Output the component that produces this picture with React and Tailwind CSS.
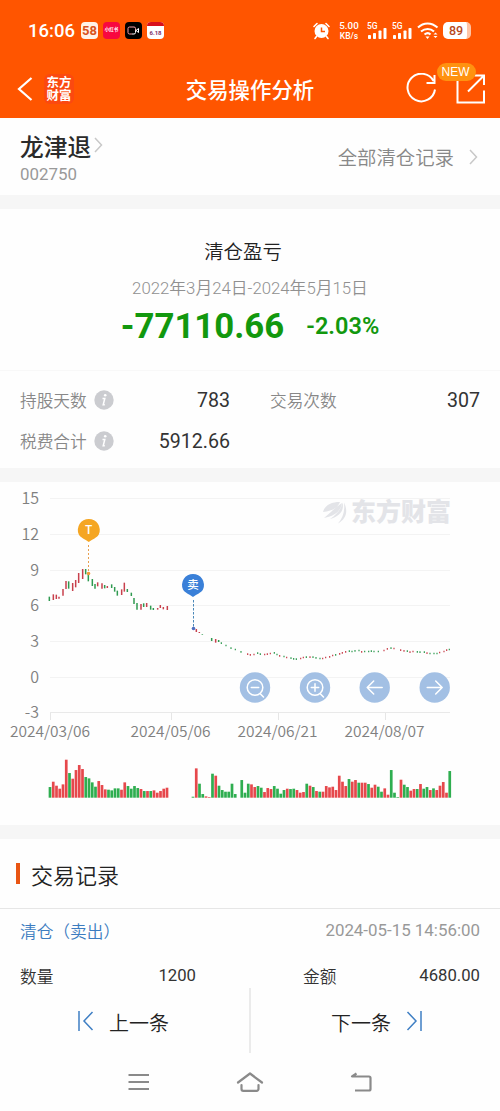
import React from "react";

// 3px wide candles: x, high, low, direction (chart units are 1/3 px)
const candles = [
  [148, 350, 363, "g"], [160, 343, 360, "r"], [169, 344, 357, "r"], [177, 350, 356, "r"],
  [189, 327, 347, "r"], [198, 303, 327, "r"], [206, 304, 326, "g"], [218, 309, 333, "r"],
  [227, 300, 322, "r"], [236, 279, 309, "r"], [248, 267, 297, "r"], [257, 267, 283, "g"],
  [265, 285, 304, "g"], [277, 297, 318, "g"], [285, 312, 326, "g"], [293, 307, 319, "r"],
  [306, 310, 326, "r"], [314, 315, 325, "g"], [322, 318, 324, "r"], [335, 313, 324, "g"],
  [344, 321, 335, "g"], [352, 332, 347, "g"], [365, 328, 345, "r"], [373, 308, 335, "r"],
  [382, 327, 336, "g"], [394, 338, 348, "g"], [402, 354, 372, "g"], [411, 369, 389, "g"],
  [423, 372, 389, "r"], [431, 370, 381, "g"], [440, 369, 381, "r"], [452, 377, 389, "g"],
  [460, 384, 390, "g"], [473, 384, 389, "r"], [481, 375, 384, "r"], [490, 381, 388, "r"],
  [502, 378, 390, "r"], [589, 447, 456, "r"], [598, 456, 459, "r"], [607, 463, 465, "g"],
  [635, 474, 483, "g"], [647, 477, 488, "r"], [656, 480, 486, "g"],
];

// flat days after the gap: x, y, direction
const dots = [
  [664, 489, "g"], [678, 496, "g"], [693, 504, "g"], [706, 508, "g"], [723, 515, "g"],
  [743, 522, "r"], [751, 524, "r"], [762, 523, "r"], [773, 519, "g"], [781, 522, "g"],
  [794, 523, "r"], [802, 522, "r"], [811, 520, "r"], [823, 518, "g"], [831, 523, "g"],
  [839, 527, "r"], [852, 529, "g"], [860, 532, "r"], [873, 534, "g"], [881, 536, "g"],
  [889, 537, "g"], [902, 535, "r"], [910, 532, "r"], [919, 531, "g"], [930, 531, "r"],
  [939, 531, "g"], [948, 533, "g"], [960, 535, "g"], [968, 535, "r"], [977, 532, "r"],
  [989, 530, "r"], [998, 526, "r"], [1007, 524, "g"], [1019, 521, "r"], [1027, 518, "r"],
  [1037, 515, "r"], [1048, 513, "g"], [1056, 514, "g"], [1065, 512, "g"], [1077, 511, "g"],
  [1085, 515, "r"], [1094, 514, "g"], [1106, 514, "g"], [1114, 513, "g"], [1122, 514, "g"],
  [1135, 514, "g"], [1152, 511, "r"], [1162, 506, "r"], [1173, 504, "g"], [1182, 505, "r"],
  [1202, 510, "r"], [1212, 512, "r"], [1222, 513, "g"], [1230, 516, "r"], [1239, 514, "r"],
  [1252, 515, "g"], [1260, 516, "g"], [1273, 516, "g"], [1281, 519, "r"], [1290, 520, "g"],
  [1302, 520, "g"], [1311, 520, "g"], [1319, 517, "r"], [1332, 514, "r"], [1340, 510, "r"],
  [1348, 508, "g"],
];

const volumeA =
  "g32 r48 r36 r27 r40 r114 g74 r57 r83 r98 r86 g62 g58 g46 g33 r50 r38 r25 g24 g22 g28 g28 r24 r46 g35 g27 g35 g29 r26 g20 r20 g20 r22 r15 r20 r27 r30";
const volumeB =
  "g3 r88 g42 g11 r4 r2 g72 r66 g36 g23 g18 g18 g42 g11 g0 g53 g15 g42 r40 r32 g35 g30 r17 r29 r26 g35 g27 g12 g23 r27 g26 g27 r23 r15 r17 g42 r36 g32 r20 g18 r18 r35 r31 r33 r23 r66 r48 r35 g56 r48 r53 g45 r45 r45 g41 r30 r39 g33 g18 r28 r9 g83 g15 g2 r54 g39 g32 r21 r26 g26 r41 g27 g32 r23 g28 r23 r36 r47 r15 g80";

const yAxis = [
  ["15", 498], ["12", 534], ["9", 570], ["6", 605], ["3", 641], ["0", 677], ["-3", 712],
];
const xAxis = [
  ["2024/03/06", 50], ["2024/05/06", 170.5], ["2024/06/21", 277.5], ["2024/08/07", 384.5],
];

const candleColor = { r: "#c8404c", g: "#2f9a50" };
const barColor = { r: "#e6484c", g: "#2fae50" };

const VolumeBars = ({ data, start }) =>
  data.split(" ").map((item, i) => {
    const h = Number(item.slice(1)) / 3;
    return (
      <rect
        key={i}
        x={start + i * 3.25 - 1.35}
        y={797.7 - h}
        width="2.7"
        height={h}
        fill={barColor[item[0]]}
      />
    );
  });

const RoundButton = ({ x, children }) => (
  <g transform={`translate(${x} 687.5)`}>
    <circle r="15.2" fill="#a3c0e4" />
    <g fill="none" stroke="#fff" strokeWidth="1.5" strokeLinecap="round" strokeLinejoin="round">
      {children}
    </g>
  </g>
);

const Chart = () => (
  <svg
    width="500"
    height="343"
    viewBox="0 482 500 343"
    className="block font-['Noto_Sans_CJK_SC',sans-serif] font-[350]"
  >
    {yAxis.map(([label, y]) => (
      <g key={label}>
        <path d={`M50 ${y + 0.5}H450`} stroke={label === "-3" ? "#e9e9e9" : "#f3f3f3"} />
        <text x="39" y={y + 5.5} textAnchor="end" fontSize="16" fill="#808080">
          {label}
        </text>
      </g>
    ))}
    {xAxis.map(([label, x]) => (
      <g key={label}>
        <path d={`M${Math.round(x) + 0.5} 713v7`} stroke="#e6e6e6" />
        <text x={x} y="737" textAnchor="middle" fontSize="15.5" fill="#808080">
          {label}
        </text>
      </g>
    ))}

    {/* watermark */}
    <g fill="#e3e4e8">
      <path d="M323 512c2-7 8-10 17-10-2 6-8 9-17 10zM324 518c7-6 11-10 18-15-1 8-7 13-18 15z" />
      <path d="M330 519c6-4 11-9 12.500-16.500 2 8-3 14-12.500 16.500zM338 523.500c5-6 7-12 6-21 4 8 3 16-6 21z" />
      <text x="351" y="521" fontSize="25" fontWeight="900" textLength="100">
        东方财富
      </text>
    </g>

    <g transform="translate(0 480) scale(0.33333)">
      {candles.map(([x, high, low, dir]) => (
        <path key={x} d={`M${x} ${high}V${low}`} stroke={candleColor[dir]} strokeWidth="4.500" />
      ))}
      {dots.map(([x, y, dir]) => (
        <path key={x} d={`M${x} ${y - 2}v5`} stroke={candleColor[dir]} strokeWidth="3.6" />
      ))}
    </g>

    {/* trade markers */}
    <path d="M88.5 545v27" stroke="#e8a050" strokeDasharray="2 2" />
    <circle cx="88.5" cy="573.5" r="1.8" fill="#f09a3c" />
    <path d="M78.8 534.5a11 11 0 1 1 20 0c-2 3.500-6 4.500-10 7.500-4-3-8-4-10-7.500z" fill="#f5a623" />
    <text x="88.700" y="533.500" textAnchor="middle" fontSize="12" fontWeight="500" fill="#fff">
      T
    </text>
    <path d="M193.500 600v27" stroke="#4a88b8" strokeDasharray="2.500 1.500" />
    <circle cx="193.500" cy="628.500" r="1.800" fill="#4f6fc0" />
    <path d="M183 589.500a11 11 0 1 1 20 0c-2 3.500-6 4.500-10 7.500-4-3-8-4-10-7.500z" fill="#3a80d8" />
    <text x="193" y="588.500" textAnchor="middle" fontSize="11.500" fontWeight="500" fill="#fff">
      卖
    </text>

    <RoundButton x={255}>
      <circle r="7.800" />
      <path d="M-3.700 0h7.400M5.500 6.500l3 3" />
    </RoundButton>
    <RoundButton x={315}>
      <circle r="7.800" />
      <path d="M-3.700 0h7.400M0-3.700v7.400M5.500 6.500l3 3" />
    </RoundButton>
    <RoundButton x={374.7}>
      <path d="M7.500 0h-15M-1-6.500l-6.500 6.500 6.500 6.500" />
    </RoundButton>
    <RoundButton x={434.7}>
      <path d="M-7.500 0h15M1-6.500l6.500 6.500-6.500 6.500" />
    </RoundButton>

    <VolumeBars data={volumeA} start={50} />
    <VolumeBars data={volumeB} start={193} />
  </svg>
);

const Chevron = ({ className }) => (
  <svg width="9" height="16" viewBox="0 0 9 16" className={className}>
    <path d="M1 1l6.500 7L1 15" fill="none" stroke="#c8c8c8" strokeWidth="1.500" />
  </svg>
);

const Signal = () => (
  <div className="relative h-[18px] w-[20px]">
    <span className="absolute -top-[1px] left-0 text-[8.5px] leading-[10px] font-medium">5G</span>
    <svg width="20" height="18" viewBox="0 0 20 18" className="block" fill="#fff">
      <rect x="1" y="13" width="3" height="4" rx=".8" />
      <rect x="6" y="11" width="3" height="6" rx=".8" />
      <rect x="11.500" y="8.500" width="3" height="8.500" rx=".8" />
      <rect x="16.500" y="6" width="3" height="11" rx=".8" />
    </svg>
  </div>
);

const StatusBar = () => (
  <div className="flex h-[61px] items-center justify-between pr-[28px] pl-[28px]">
    <div className="flex items-center gap-[5px]">
      <span className="mt-px mr-[2px] w-[46px] text-[18.5px] leading-none font-medium whitespace-nowrap">
        16:06
      </span>
      <span className="flex size-[17px] items-center justify-center rounded-[4px] bg-[#fff3e8] text-[13px] leading-none font-bold text-[#d9541c]">
        58
      </span>
      <span className="flex size-[17px] items-center justify-center rounded-[4px] bg-[#f8083f] text-[4.5px] leading-none font-bold whitespace-nowrap">
        小红书
      </span>
      <span className="flex size-[17px] items-center justify-center rounded-[4px] bg-black">
        <svg width="13" height="9" viewBox="0 0 13 9" fill="none" stroke="#fff">
          <path d="M5 8H2.500A1.500 1.500 0 0 1 1 6.500v-4A1.500 1.500 0 0 1 2.500 1H7a1.500 1.500 0 0 1 1.500 1.500V5" stroke="#f4a0a8" />
          <path d="M8.500 4.500V6.500A1.500 1.500 0 0 1 7 8H5M9 4.500l2.500-2v4z" />
        </svg>
      </span>
      <span className="flex size-[17px] flex-col overflow-hidden rounded-[4px] bg-white">
        <span className="h-[4px] bg-[#d8101c]" />
        <span className="flex flex-1 items-center justify-center text-[6px] leading-none font-bold text-[#803068]">
          6.18
        </span>
      </span>
    </div>
    <div className="flex items-center">
      <svg width="17" height="18" viewBox="0 0 17 18" className="mr-[9px] ml-px">
        <circle cx="8.500" cy="9" r="7" fill="#fff" />
        <path d="M1 4.500L4 1.500M16 4.500l-3-3M3.500 14.500L2 16.500M13.500 14.500l1.500 2" stroke="#fff" strokeWidth="1.600" strokeLinecap="round" />
        <path d="M8.500 5.500V9.500H12" fill="none" stroke="#f50" strokeWidth="1.500" />
      </svg>
      <div className="mr-[8px] flex w-[20px] flex-col items-center leading-[10px] font-medium">
        <span className="text-[9.8px]">5.00</span>
        <span className="text-[8.5px]">KB/s</span>
      </div>
      <Signal />
      <span className="w-[5px]" />
      <Signal />
      <svg width="22" height="18" viewBox="0 0 22 18" fill="none" stroke="#fff" strokeWidth="2" className="mr-[4px] ml-[5px]">
        <path d="M1 5.500C6.500 0 14.500 0 20.500 5.500M4 9.500C8 6 13.500 6 17 9.500M7.500 12.500c2-1.600 4.500-1.600 6 0" />
        <path d="M8.500 14.500h4l-2 2.500zM16.500 12.500l2-2 2 2zM16.500 14l2 2 2-2z" fill="#fff" stroke="none" />
      </svg>
      <span className="mr-px flex h-[17px] w-[28px] items-center justify-center rounded-[5px] border-r-[4px] border-[#ffc4a6] bg-white text-[12.5px] leading-none font-medium text-[#b8481c]">
        <span className="pt-px pl-[2px]">89</span>
      </span>
    </div>
  </div>
);

const NavBar = () => (
  <div className="relative flex h-[57px] items-center justify-between pr-[14px] pb-[2px] pl-[17px]">
    <div className="flex items-center gap-[11px]">
      <svg width="16" height="26" viewBox="0 0 16 26" fill="none" stroke="#fff" strokeWidth="2.200">
        <path d="M14.500 2L2 13l12.500 11" />
      </svg>
      <span className="flex size-[30px] items-center justify-center rounded-[6px] bg-[#fb4910] text-[12.5px] leading-[13px] font-bold">
        东方
        <br />
        财富
      </span>
    </div>
    <h1 className="absolute inset-x-0 top-[16px] text-center text-[21.4px] leading-[28px] font-medium">
      交易操作分析
    </h1>
    <div className="relative flex items-center gap-[19px]">
      <svg width="31" height="32" viewBox="0 0 31 32" fill="none" stroke="#fff" strokeWidth="2">
        <path d="M27.500 8A13.800 13.800 0 1 0 29 16.500M28.500 2v8h-8" />
      </svg>
      <svg width="30" height="30" viewBox="0 0 30 30" fill="none" stroke="#fff" strokeWidth="2">
        <path d="M15 3H1.500v25.500H28V16.500M12 17.500L27.500 2M18.500 1.500h9.500v9.500" />
      </svg>
      <span className="absolute -top-[10px] left-[31px] flex h-[18px] w-[39px] items-center justify-center rounded-full bg-[#ff9210] pr-[2px] font-['Liberation_Sans'] text-[12px]">
        NEW
      </span>
    </div>
  </div>
);

const InfoIcon = () => (
  <svg width="20" height="20" viewBox="0 0 20 20" className="-mt-[3px] ml-[7px]">
    <circle cx="10" cy="10" r="9.700" fill="#cbccd0" />
    <circle cx="11.200" cy="5.300" r="1.300" fill="#fff" />
    <path d="M8.500 8.500h2.300l-1.600 6.300h1.600" fill="none" stroke="#fff" strokeWidth="1.500" />
  </svg>
);

const Stat = ({ label, value, info }) => (
  <div className="flex h-[41px] items-center justify-between">
    <span className="flex items-center pt-[3px] text-[16.7px] font-[350] text-[#888]">
      {label}
      {info && <InfoIcon />}
    </span>
    <span className="pt-px text-[19.6px] text-[#333]">{value}</span>
  </div>
);

const App = () => {
  return (
    <div className="h-[1111px] w-[500px] overflow-hidden bg-[#fefefe] font-[Roboto,'Noto_Sans_CJK_SC',sans-serif]">
      <header className="h-[118px] bg-[#ff5500] text-white">
        <StatusBar />
        <NavBar />
      </header>

      <section className="flex h-[77px] justify-between pr-[22px] pl-[20px]">
        <div className="pt-[15px]">
          <div className="flex h-[31px] items-center">
            <span className="text-[23.7px] leading-[31px] font-medium text-[#2b2b2b]">龙津退</span>
            <Chevron className="-mt-[7px] ml-[3px]" />
          </div>
          <p className="text-[16.9px] leading-[20px] text-[#999]">002750</p>
        </div>
        <div className="flex items-center">
          <span className="mt-[4px] text-[19.4px] font-[350] text-[#888]">全部清仓记录</span>
          <Chevron className="ml-[15px]" />
        </div>
      </section>

      <div className="h-[14px] bg-[#f6f6f6]" />

      <section className="flex h-[162px] flex-col items-center border-b border-[#f8f8f8] pt-[30px]">
        <h2 className="pr-[14px] text-[19.4px] leading-[28px] font-[350] text-[#222]">清仓盈亏</h2>
        <p className="mt-[9px] text-[16.8px] leading-[24px] font-[350] text-[#909090]">
          2022年3月24日-2024年5月15日
        </p>
        <div className="mt-[6px] flex h-[40px] items-center gap-[22px] text-[#12980e]">
          <span className="text-[34.8px] leading-[40px] font-bold">-77110.66</span>
          <span className="text-[23.5px] leading-[40px] font-semibold">-2.03%</span>
        </div>
      </section>

      <section className="grid h-[97px] grid-cols-2 content-start gap-x-[40px] px-[20px] pt-[9px]">
        <Stat label="持股天数" value="783" info />
        <Stat label="交易次数" value="307" />
        <Stat label="税费合计" value="5912.66" info />
      </section>

      <div className="h-[14px] bg-[#f6f6f6]" />
      <Chart />
      <div className="h-[14px] bg-[#f6f6f6]" />

      <section>
        <div className="flex h-[70px] items-center border-b border-[#e6e6e6] pl-[16px]">
          <span className="h-[21px] w-[4px] bg-[#e95513]" />
          <h2 className="mt-[6px] ml-[11px] text-[22px] font-[350] text-[#222]">交易记录</h2>
        </div>
        <div className="flex h-[44px] items-center justify-between px-[20px] text-[16.7px]">
          <span className="pt-[3px] font-[350] text-[#3c7cc0]">清仓（卖出）</span>
          <span className="text-[16.9px] text-[#999]">2024-05-15 14:56:00</span>
        </div>
        <div className="flex h-[35px] items-center px-[20px] pt-[11px] text-[16.7px] text-[#333]">
          <span className="w-[100px] pt-[3px] font-[350]">数量</span>
          <span className="w-[76px] text-right">1200</span>
          <span className="ml-[107px] pt-[3px] font-[350]">金额</span>
          <span className="ml-auto">4680.00</span>
        </div>
      </section>

      <nav className="flex h-[65px] items-center text-[20px] font-[350] text-[#222]">
        <div className="flex flex-1 items-center justify-end gap-[15px] pr-[80px]">
          <svg width="17" height="20" viewBox="0 0 17 20" fill="none" stroke="#3f7fc4" strokeWidth="1.500">
            <path d="M2 0v20M15.500 1L7 10l8.500 9" />
          </svg>
          <span className="mt-[6px]">上一条</span>
        </div>
        <span className="h-[65px] w-[2px] bg-[#ebebeb]" />
        <div className="flex flex-1 items-center gap-[15px] pl-[80px]">
          <span className="mt-[6px]">下一条</span>
          <svg width="17" height="20" viewBox="0 0 17 20" fill="none" stroke="#3f7fc4" strokeWidth="1.500">
            <path d="M15 0v20M1.500 1L10 10l-8.500 9" />
          </svg>
        </div>
      </nav>

      <footer className="flex h-[58px] items-center justify-between pr-[127px] pl-[128px]">
        <svg width="22" height="18" viewBox="0 0 22 18" stroke="#8a8a8a" strokeWidth="2">
          <path d="M.5 2h20.500M.5 9h20.500M.5 16h20.500" />
        </svg>
        <svg width="28" height="20" viewBox="0 0 28 20" fill="none" stroke="#8a8a8a" strokeWidth="2.200" strokeLinecap="round" strokeLinejoin="round">
          <path d="M2 10.500L14 1.500l12 9M5.500 13v4a1.800 1.800 0 0 0 1.800 1.800h13.400a1.800 1.800 0 0 0 1.800-1.800v-4" />
        </svg>
        <svg width="24" height="20" viewBox="0 0 24 20" fill="none" stroke="#8a8a8a" strokeWidth="2.200" strokeLinejoin="round">
          <path d="M7.500 1.500L3 4.500h17a1.500 1.500 0 0 1 1.500 1.500v11a1.500 1.500 0 0 1-1.500 1.500H6" />
        </svg>
      </footer>
    </div>
  );
};

export default App;
